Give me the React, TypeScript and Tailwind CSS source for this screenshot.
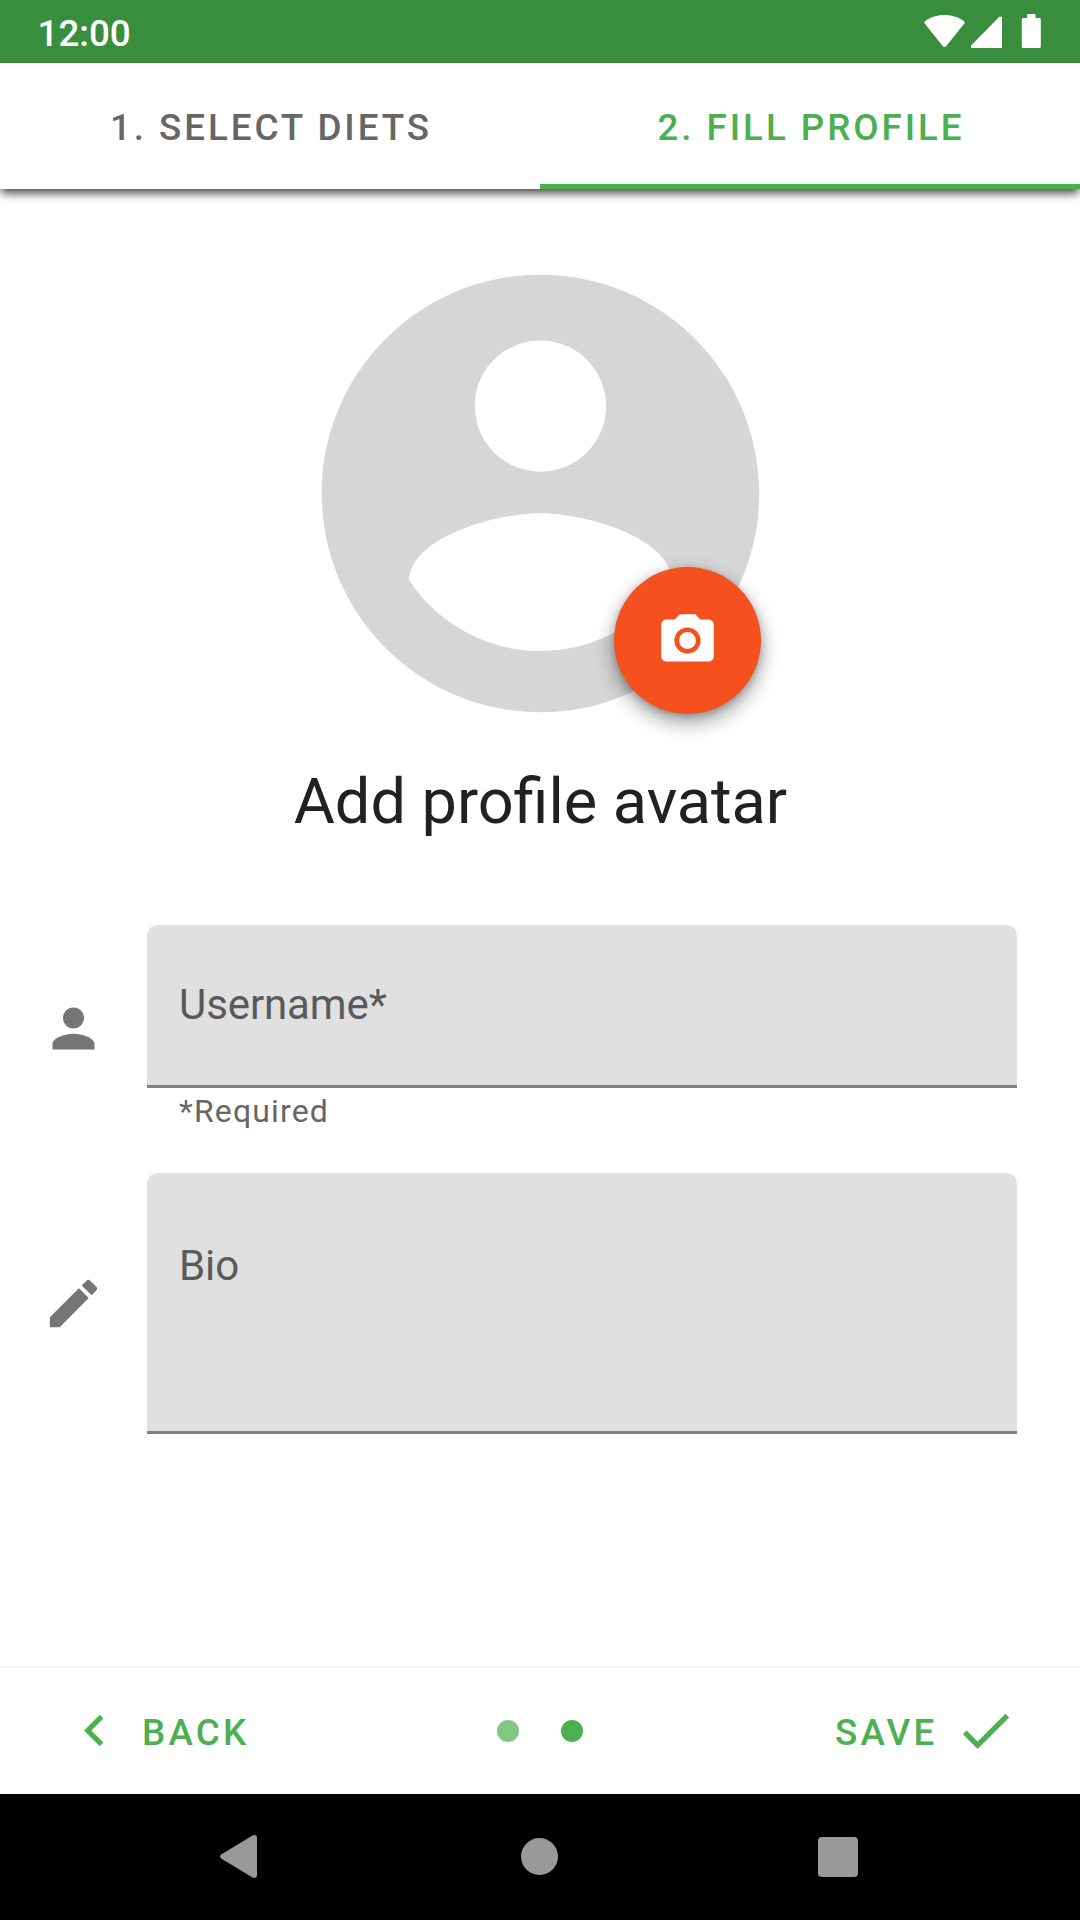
import React from "react";

function StatusBar() {
  return (
    <header className="relative z-20 flex h-[63px] shrink-0 items-center justify-between bg-[#388e3c] pl-[37.5px] pr-[39px] text-white">
      <span className="pt-[4px] text-[36.75px] leading-[42px] font-medium">12:00</span>
      <svg width="117" height="34" viewBox="0 0 117 34" fill="currentColor" className="mb-px" aria-hidden="true">
        <path d="M20.500 1C12.800 1 5.800 3.500 1.100 7.200c-.9.700-1 1.500-.4 2.300L18.900 32.200c.9 1.100 2.300 1.100 3.200 0L40.300 9.500c.6-.8.5-1.600-.4-2.300C35.200 3.500 28.200 1 20.500 1z" />
        <path d="M75.800 3H78v30.500c0 .8-.4 1.200-1.200 1.200H48.500c-1.200 0-1.500-.5-1.500-1.200v-1.700L74.800 3.600c.3-.4.600-.6 1-.6z" transform="translate(0 -.3)" />
        <path d="M103 0h8.500v4h3.700c1 0 1.600.6 1.600 1.600v26.800c0 1-.6 1.600-1.600 1.600H99.500c-1 0-1.700-.6-1.700-1.600V5.600c0-1 .7-1.600 1.700-1.600h3.500z" />
      </svg>
    </header>
  );
}

function Tabs() {
  return (
    <nav className="relative z-10 grid h-[126px] shrink-0 grid-cols-2 bg-white text-[36.75px] leading-[43px] font-medium tracking-[2.94px] shadow-[0_5px_9px_-1px_rgba(0,0,0,0.75)]">
      <div className="flex items-center justify-center pt-[3px] pl-[2px] text-[#666666]">1. SELECT DIETS</div>
      <div className="flex items-center justify-center border-b-[5px] border-[#4caf50] pt-[8px] pl-[2px] text-[#4caf50]">2. FILL PROFILE</div>
    </nav>
  );
}

function Avatar() {
  return (
    <div className="relative mt-[42px] size-[525px] self-center">
      <svg viewBox="0 0 24 24" className="size-full fill-[#d6d6d6]" aria-hidden="true">
        <path d="M12 2C6.480 2 2 6.480 2 12s4.480 10 10 10 10-4.480 10-10S17.520 2 12 2zm0 3c1.660 0 3 1.340 3 3s-1.340 3-3 3-3-1.340-3-3 1.340-3 3-3zm0 14.200c-2.500 0-4.710-1.280-6-3.220.03-1.990 4-3.080 6-3.080 1.990 0 5.970 1.090 6 3.080-1.290 1.940-3.500 3.220-6 3.220z" />
      </svg>
      <button aria-label="Take photo" className="absolute right-[42px] bottom-[42px] flex size-[147px] items-center justify-center rounded-full bg-[#f4511e] shadow-[0_8px_20px_rgba(0,0,0,0.4),0_2px_6px_rgba(0,0,0,0.18)]">
        <svg viewBox="0 0 24 24" className="size-[63px] fill-white" aria-hidden="true">
          <circle cx="12" cy="12" r="3.200" />
          <path d="M9 2L7.170 4H4c-1.100 0-2 .9-2 2v12c0 1.100.9 2 2 2h16c1.100 0 2-.9 2-2V6c0-1.100-.9-2-2-2h-3.170L15 2H9zm3 15c-2.760 0-5-2.240-5-5s2.240-5 5-5 5 2.240 5 5-2.240 5-5 5z" />
        </svg>
      </button>
    </div>
  );
}

function PersonIcon() {
  return (
    <svg viewBox="0 0 24 24" className="mx-[42px] mt-[72px] size-[63px] shrink-0 fill-[#757575]" aria-hidden="true">
      <path d="M12 12c2.210 0 4-1.790 4-4s-1.790-4-4-4-4 1.790-4 4 1.790 4 4 4zm0 2c-2.670 0-8 1.340-8 4v2h16v-2c0-2.660-5.330-4-8-4z" />
    </svg>
  );
}

function PencilIcon() {
  return (
    <svg viewBox="0 0 24 24" className="mx-[42px] mt-[99px] size-[63px] shrink-0 fill-[#757575]" aria-hidden="true">
      <path d="M3 17.250V21h3.750L17.810 9.940l-3.750-3.750L3 17.250zM20.710 7.040c.39-.39.39-1.020 0-1.410l-2.340-2.340c-.39-.39-1.020-.39-1.410 0l-1.830 1.830 3.750 3.750 1.830-1.830z" />
    </svg>
  );
}

function ProfileForm() {
  return (
    <form className="mt-[85px] pr-[63px]">
      <div className="flex h-[248px]">
        <PersonIcon />
        <div className="flex-1">
          <div className="h-[163px] rounded-t-[10.5px] border-b-[3px] border-[#808080] bg-[#e0e0e0] pt-[55px] pl-[32px] text-[42px] leading-[50px] tracking-[-0.1px] text-[#5a5a5a]">
            Username*
          </div>
          <p className="pt-[4px] pl-[32px] text-[32px] leading-[38px] tracking-[1.15px] text-[#666666]">*Required</p>
        </div>
      </div>
      <div className="flex">
        <PencilIcon />
        <div className="h-[261px] flex-1 rounded-t-[10.5px] border-b-[3px] border-[#808080] bg-[#e0e0e0] pt-[68px] pl-[32px] text-[42px] leading-[50px] tracking-[-0.1px] text-[#5a5a5a]">
          Bio
        </div>
      </div>
    </form>
  );
}

function Stepper() {
  return (
    <footer className="grid h-[128px] shrink-0 grid-cols-3 items-center border-t-2 border-[#f4f4f4] bg-white text-[36.75px] leading-[42px] font-medium tracking-[3.2px] text-[#4caf50]">
      <button className="flex items-center pl-[63px]">
        <svg viewBox="0 0 24 24" className="mb-px size-[63px] fill-current" aria-hidden="true">
          <path d="M15.410 7.410L14 6l-6 6 6 6 1.410-1.410L10.830 12z" />
        </svg>
        <span className="pt-[4px] pl-[16px]">BACK</span>
      </button>
      <div className="flex justify-center gap-[42px]">
        <span className="size-[22px] rounded-full bg-[#81c784]" />
        <span className="size-[22px] rounded-full bg-[#4caf50]" />
      </div>
      <button className="flex items-center justify-end pr-[63px]">
        <span className="pt-[4px] pr-[16.5px]">SAVE</span>
        <svg viewBox="0 0 24 24" className="mb-px size-[63px] fill-current" aria-hidden="true">
          <path d="M9 16.170L4.830 12l-1.420 1.410L9 19 21 7l-1.410-1.410z" />
        </svg>
      </button>
    </footer>
  );
}

function NavigationBar() {
  return (
    <div className="flex h-[126px] shrink-0 items-center bg-black pl-[220px]">
      <svg width="37" height="43" viewBox="0 0 37 43" className="mb-px fill-[#999999]" aria-hidden="true">
        <path d="M1.200 19.500L32.500.6C34.500-.5 37 .2 37 3v37c0 2.800-2.500 3.500-4.500 2.400L1.200 23.500C-.3 22.500-.3 20.500 1.200 19.500z" />
      </svg>
      <span className="mb-[2px] ml-[264px] size-[37px] rounded-full bg-[#999999]" />
      <span className="ml-[260px] h-[40px] w-[40px] rounded-[4px] bg-[#999999]" />
    </div>
  );
}

export default function App() {
  return (
    <div className="flex h-[1920px] w-[1080px] flex-col overflow-hidden bg-white font-['Roboto',sans-serif]">
      <StatusBar />
      <Tabs />
      <main className="flex min-h-0 flex-1 flex-col">
        <Avatar />
        <h1 className="mt-[8px] pl-px text-center text-[63px] leading-[76px] text-[#212121]">Add profile avatar</h1>
        <ProfileForm />
      </main>
      <Stepper />
      <NavigationBar />
    </div>
  );
}
